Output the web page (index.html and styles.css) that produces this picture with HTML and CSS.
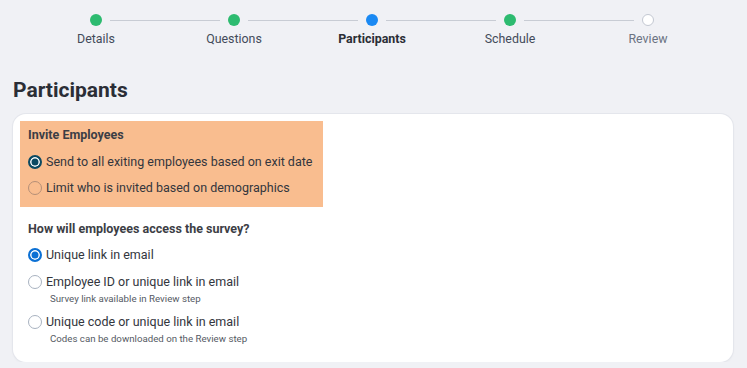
FILE: index.html
```html
<!DOCTYPE html>
<html lang="en">
<head>
  <meta charset="UTF-8" />
  <meta name="viewport" content="width=device-width, initial-scale=1.0" />
  <title>Participants</title>
  <link rel="stylesheet" href="styles.css">
</head>
<body>
  <div class="steps">
    <div class="step done">
      <div class="track"><span class="half"></span><span class="dot"></span><span class="half"></span></div>
      <div class="step-label">Details</div>
    </div>
    <div class="step done">
      <div class="track"><span class="half"></span><span class="dot"></span><span class="half"></span></div>
      <div class="step-label">Questions</div>
    </div>
    <div class="step current">
      <div class="track"><span class="half"></span><span class="dot"></span><span class="half"></span></div>
      <div class="step-label">Participants</div>
    </div>
    <div class="step done">
      <div class="track"><span class="half"></span><span class="dot"></span><span class="half"></span></div>
      <div class="step-label">Schedule</div>
    </div>
    <div class="step todo">
      <div class="track"><span class="half"></span><span class="dot"></span><span class="half"></span></div>
      <div class="step-label">Review</div>
    </div>
  </div>

  <h1 class="page-title">Participants</h1>

  <div class="card">
    <div class="group highlight">
      <div class="group-title">Invite Employees</div>
      <label class="option">
        <input type="radio" name="invite" class="radio dark" checked>
        <span>Send to all exiting employees based on exit date</span>
      </label>
      <label class="option">
        <input type="radio" name="invite" class="radio dark">
        <span>Limit who is invited based on demographics</span>
      </label>
    </div>

    <div class="group">
      <div class="group-title">How will employees access the survey?</div>
      <label class="option">
        <input type="radio" name="access" class="radio" checked>
        <span>Unique link in email</span>
      </label>
      <label class="option">
        <input type="radio" name="access" class="radio">
        <span>Employee ID or unique link in email</span>
      </label>
      <div class="hint">Survey link available in Review step</div>
      <label class="option">
        <input type="radio" name="access" class="radio">
        <span>Unique code or unique link in email</span>
      </label>
      <div class="hint">Codes can be downloaded on the Review step</div>
    </div>
  </div>
</body>
</html>
```

FILE: styles.css
```css
body {
  font-family: Roboto, "Liberation Sans", Arial, sans-serif;
  background-color: #f0f1f5;
  color: #33363d;
  margin: 0;
  padding: 0 14px 0 13px;
}
.steps {
  display: flex;
  padding: 14px 0 0 14px;
}
.step {
  width: 138px;
  display: flex;
  flex-direction: column;
  align-items: center;
}
.track {
  width: 100%;
  height: 12px;
  display: flex;
  align-items: center;
}
.half {
  flex: 1;
  height: 1px;
  background: #c8ccd4;
  margin-top: 1px;
}
.half:first-child {
  margin-right: 8px;
}
.half:last-child {
  margin-left: 8px;
}
.step:first-child .half:first-child,
.step:last-child .half:last-child {
  background: transparent;
}
.dot {
  width: 12px;
  height: 12px;
  border-radius: 50%;
  box-sizing: border-box;
}
.done .dot {
  background: #2dbb70;
}
.current .dot {
  background: #1a89f3;
}
.todo .dot {
  background: #fff;
  border: 1.5px solid #c3c8d2;
}
.step-label {
  font-size: 12.4px;
  line-height: 16px;
  margin-top: 5px;
  color: #434b5a;
}
.current .step-label {
  font-weight: bold;
  color: #2b2e36;
}
.todo .step-label {
  color: #6b7382;
}
.page-title {
  font-size: 21px;
  line-height: 26px;
  font-weight: bold;
  color: #2b2e36;
  margin: 30px 0 11px;
}
.card {
  background: #fff;
  border-radius: 13px;
  box-shadow: 0 0 0 1px #e4e6ec, 0 1px 3px rgba(0, 0, 0, 0.06);
  padding: 7px 7px 7px;
  height: 248px;
  box-sizing: border-box;
}
.group {
  display: flex;
  flex-direction: column;
  padding: 14px 8px 10px;
}
.highlight {
  width: fit-content;
  background: #f9bd8f;
  padding: 6px 11px 9px 8px;
}
.group-title {
  font-size: 12.5px;
  line-height: 16px;
  font-weight: bold;
  color: #3c3e45;
}
.option {
  display: flex;
  align-items: center;
  gap: 4px;
  font-size: 12.5px;
  line-height: 20px;
  margin-top: 7px;
}
.group-title + .option {
  margin-top: 8px;
}
.highlight .group-title + .option {
  margin-top: 9px;
}
.highlight .option + .option {
  margin-top: 6px;
}
.radio {
  appearance: none;
  width: 14px;
  height: 14px;
  margin: 0;
  border-radius: 50%;
  border: 1px solid #a8b2c0;
  background: #fff;
  box-sizing: border-box;
  flex-shrink: 0;
}
.radio:checked {
  border: 2px solid #0b70d4;
  background: #0b70d4;
  box-shadow: inset 0 0 0 1.5px #fff;
}
.radio.dark {
  background: transparent;
  border-color: #b58f77;
}
.radio.dark:checked {
  border: 2px solid #0c4a62;
  background: #0c4a62;
  box-shadow: inset 0 0 0 1.5px #fff;
}
.hint {
  font-size: 9.7px;
  line-height: 12px;
  color: #555a64;
  margin: 1px 0 0 22px;
}
```
